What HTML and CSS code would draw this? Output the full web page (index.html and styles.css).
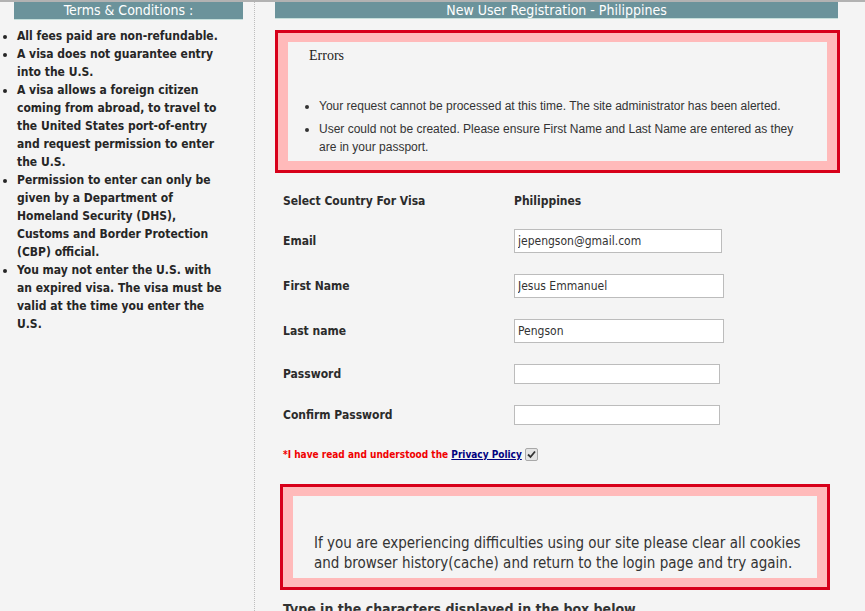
FILE: index.html
```html
<!DOCTYPE html>
<html lang="en">
<head>
  <title>New User Registration - Philippines</title>
  <meta charset="UTF-8">
  <link rel="stylesheet" href="styles.css">
</head>
<body>
  <div class="page">
    <div class="sidebar">
      <div class="bar bar-left">Terms &amp; Conditions :</div>
      <ul class="terms">
        <li>All fees paid are non-refundable.</li>
        <li>A visa does not guarantee entry into the U.S.</li>
        <li>A visa allows a foreign citizen coming from abroad, to travel to the United States port-of-entry and request permission to enter the U.S.</li>
        <li>Permission to enter can only be given by a Department of Homeland Security (DHS), Customs and Border Protection (CBP) official.</li>
        <li>You may not enter the U.S. with an expired visa. The visa must be valid at the time you enter the U.S.</li>
      </ul>
    </div>

    <div class="main">
      <div class="bar bar-right">New User Registration - Philippines</div>

      <div class="alert alert-errors">
        <div class="alert-inner">
          <div class="errors-title">Errors</div>
          <ul class="errors">
            <li>Your request cannot be processed at this time. The site administrator has been alerted.</li>
            <li>User could not be created. Please ensure First Name and Last Name are entered as they are in your passport.</li>
          </ul>
        </div>
      </div>

      <div class="form">
        <div class="row row-text">
          <label>Select Country For Visa</label>
          <span class="value">Philippines</span>
        </div>
        <div class="row">
          <label for="email">Email</label>
          <input id="email" class="field field-email" type="text" value="jepengson@gmail.com">
        </div>
        <div class="row">
          <label for="first">First Name</label>
          <input id="first" class="field field-name" type="text" value="Jesus Emmanuel">
        </div>
        <div class="row">
          <label for="last">Last name</label>
          <input id="last" class="field field-name" type="text" value="Pengson">
        </div>
        <div class="row">
          <label for="pw">Password</label>
          <input id="pw" class="field field-pw" type="password">
        </div>
        <div class="row">
          <label for="pw2">Confirm Password</label>
          <input id="pw2" class="field field-pw" type="password">
        </div>
      </div>

      <div class="privacy">
        <span>*I have read and understood the <a href="#">Privacy Policy</a></span>
        <span class="check">
          <svg width="9" height="9" viewBox="0 0 9 9"><path d="M1 4.5 L3.5 7 L8 1.5" fill="none" stroke="#333" stroke-width="1.8"/></svg>
        </span>
      </div>

      <div class="alert alert-notice">
        <div class="alert-inner notice-inner">
          If you are experiencing difficulties using our site please clear all cookies and browser history(cache) and return to the login page and try again.
        </div>
      </div>

      <div class="captcha-note">Type in the characters displayed in the box below</div>
    </div>
  </div>
</body>
</html>
```

FILE: styles.css
```css
:root {
  --bg: #f4f4f4;
  --bar: #6b939b;
  --bar-edge: #c6dfdb;
  --alert-red: #d7001a;
  --alert-pink: #ffbaba;
  --text: #2b2b2b;
}
body {
  margin: 0;
  background-color: var(--bg);
  color: var(--text);
  font-family: Tahoma, "DejaVu Sans Condensed", "DejaVu Sans", sans-serif;
  font-size: 12px;
  overflow: hidden;
}
.page {
  display: flex;
  border-top: 2px solid #b2b2b2;
  min-height: 609px;
}
.sidebar {
  width: 254px;
  flex-shrink: 0;
  border-right: 1px dotted #bdbdbd;
}
.bar {
  color: #fff;
  font-size: 14px;
  line-height: 16px;
  height: 16px;
  text-align: center;
  background-color: var(--bar);
  border-bottom: 1px solid var(--bar-edge);
}
.bar-left {
  margin-left: 14px;
  width: 229px;
  height: 17px;
}
.terms {
  margin: 7px 0 0;
  padding: 0 30px 0 17px;
  font-weight: bold;
  line-height: 18px;
  color: #262626;
}
.main {
  flex: 1;
  padding-left: 20px;
  padding-right: 27px;
}
.alert {
  border: 3px solid var(--alert-red);
  background-color: var(--alert-pink);
  padding: 9px 10px;
}
.alert-inner {
  background-color: var(--bg);
}
.alert-errors {
  margin-top: 11px;
  margin-right: -2px;
}
.errors-title {
  font-family: "Liberation Serif", serif;
  font-size: 14px;
  line-height: 16px;
  padding: 6px 0 0 21px;
  color: #222;
}
.errors {
  margin: 33px 0 0;
  padding: 0 17px 5px 31px;
  font-family: "Liberation Sans", Arial, sans-serif;
  font-size: 12px;
  line-height: 18px;
  color: #333;
}
.errors li + li {
  margin-top: 5px;
}
.form {
  display: flex;
  flex-direction: column;
  gap: 21px;
  margin-top: 19px;
  padding-left: 8px;
}
.row {
  display: grid;
  grid-template-columns: 231px auto;
  align-items: center;
  justify-items: start;
}
.row-text {
  height: 16px;
  margin-top: 1px;
  margin-bottom: -1px;
}
.row label,
.value {
  font-weight: bold;
  color: #2b2b2b;
}
.field {
  box-sizing: border-box;
  margin: 0;
  border: 1px solid #bcbcbc;
  background-color: #fff;
  padding: 0 3px;
  font-family: inherit;
  font-size: 12px;
  color: #333;
}
.field-email {
  width: 208px;
  height: 24px;
}
.field-name {
  width: 210px;
  height: 24px;
}
.field-pw {
  width: 206px;
  height: 20px;
}
.privacy {
  display: flex;
  align-items: center;
  margin-top: 23px;
  padding-left: 8px;
  font-size: 10px;
  font-weight: bold;
  color: #f00000;
}
.privacy a {
  color: #000080;
}
.check {
  display: inline-flex;
  align-items: center;
  justify-content: center;
  width: 11px;
  height: 11px;
  margin-left: 3px;
  border: 1px solid #a8a8a8;
  border-radius: 2px;
  background-color: #e4e4e4;
}
.alert-notice {
  margin: 23px 8px 0 5px;
}
.notice-inner {
  padding: 37px 10px 5px 21px;
  font-size: 15px;
  line-height: 20px;
  color: #333;
}
.captcha-note {
  margin-top: 11px;
  padding-left: 8px;
  font-size: 14px;
  font-weight: bold;
  color: #333;
}
```
